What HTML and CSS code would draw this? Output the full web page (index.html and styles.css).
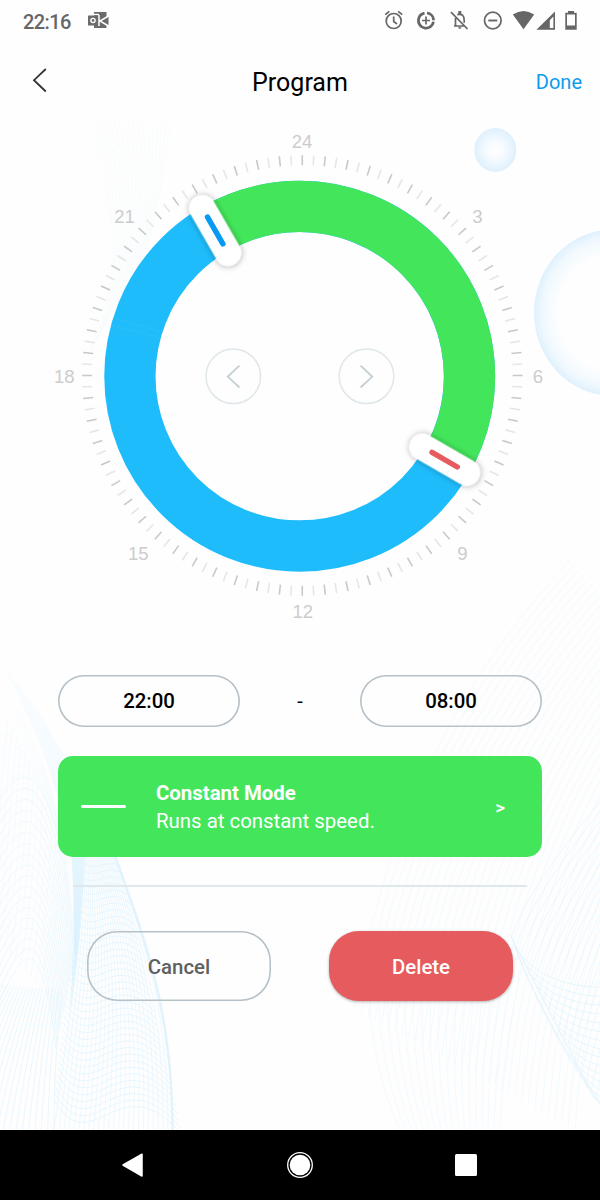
FILE: index.html
```html
<!DOCTYPE html>
<html lang="en">
<head>
  <meta charset="UTF-8" />
  <meta name="viewport" content="width=device-width, initial-scale=1.0"/>
  <title>Program</title>
  <link rel="stylesheet" href="styles.css">
</head>
<body>
  <svg class="backdrop" viewBox="0 0 600 1130" aria-hidden="true">
    <defs>
      <radialGradient id="bubble">
        <stop offset="0" stop-color="#fdfeff"/>
        <stop offset="0.35" stop-color="#f9fcff"/>
        <stop offset="1" stop-color="#def0fd"/>
      </radialGradient>
      <radialGradient id="bigBubble">
        <stop offset="0.68" stop-color="#fefefe"/>
        <stop offset="0.88" stop-color="#f1f9fe"/>
        <stop offset="1" stop-color="#dff1fd"/>
      </radialGradient>
      <linearGradient id="fold" x1="0" y1="0" x2="0" y2="1">
        <stop offset="0" stop-color="#fbfdff"/>
        <stop offset="0.35" stop-color="#f3fafe"/>
        <stop offset="0.6" stop-color="#e2f4fe"/>
        <stop offset="0.8" stop-color="#d9f1fe"/>
        <stop offset="1" stop-color="#eef9ff"/>
      </linearGradient>
    </defs>
    <ellipse cx="495.3" cy="150" rx="21" ry="22" fill="url(#bubble)"/>
    <ellipse cx="612" cy="312.7" rx="78" ry="83" fill="url(#bigBubble)"/>
    <path d="M0 663C25 690 45 722 66 757L86 830C84 900 78 970 69 1022C74 950 75 900 71 850C57 785 35 720 0 663Z" fill="url(#fold)"/>
    <g id="waves"></g>
  </svg>

  <header class="status-bar">
    <span class="clock">22:16</span>
    <svg class="mail-icon" width="21" height="17" viewBox="0 0 21 17">
      <path fill="#6b6b6b" d="M6 0h12.500v16H6z"/>
      <path fill="#6b6b6b" d="M12 8.500l8.500-4v9z"/>
      <path fill="none" stroke="#fff" stroke-width="1.500" d="M20.500 4L12 9l8.500 5M11 3v11M6 2.500h5"/>
      <rect x="0" y="3.500" width="10" height="10" rx="0.500" fill="#6b6b6b"/>
      <circle cx="5" cy="8.500" r="2.100" fill="none" stroke="#fff" stroke-width="1.400"/>
    </svg>
    <svg class="status-icons" width="210" height="24" viewBox="380 8 210 24">
      <g fill="none" stroke="#666" stroke-width="1.700">
        <circle cx="393.700" cy="21" r="7.500"/>
        <path d="M393.700 16.500v5l3.300 2.500M385.300 14.700l4-3.400M402.200 14.700l-4-3.400"/>
        <circle cx="426" cy="20.500" r="7.600" stroke-width="2.800" stroke-dasharray="10.500 1.600 32.800 2.900" transform="rotate(-82 426 20.500)"/>
        <path d="M426 16.500v8M422 20.500h8"/>
        <path d="M451 12.200L467.500 29M454 26h10.500M455.500 25.500v-7.500M457.300 14.600q6.900-1.700 6.900 5.900v2.200"/>
        <circle cx="492.800" cy="20.500" r="8.300"/>
        <path d="M488.300 20.500h9" stroke-width="1.900"/>
      </g>
      <g fill="#666">
        <path d="M458.300 11h3v3h-3zM458 27.300h3.600q-1.800 3.500-3.600 0z"/>
        <path d="M512.800 14.500Q523.500 7.500 534.200 14.500L523.500 29.200z"/>
        <path fill-rule="evenodd" d="M555 11.500v18.300h-18.600zM553.400 16.500l-3.600 3.800v7.700h3.600z"/>
        <path fill-rule="evenodd" d="M568 11h6v1.700h2.700v17.100h-11.400v-17.100h2.700zM567 14.600v10.800h8V14.600z"/>
      </g>
    </svg>
  </header>

  <nav class="top-bar">
    <svg class="back" width="16" height="26" viewBox="0 0 16 26"><path d="M13.800 2L2 13.200 13.800 24.500"/></svg>
    <h1>Program</h1>
    <a class="done">Done</a>
  </nav>

  <main>
    <svg class="dial" viewBox="0 120 600 520">
      <defs>
        <filter id="handleShadow" x="-40%" y="-40%" width="180%" height="180%">
          <feDropShadow dx="0" dy="0.500" stdDeviation="3" flood-color="#000" flood-opacity="0.36"/>
        </filter>
      </defs>
      <circle class="ticks" cx="302.300" cy="375.500" r="215.300" pathLength="600"/>
      <circle class="ticks minor" cx="302.300" cy="375.500" r="215.300" pathLength="600"/>
      <g class="hours">
        <text x="302" y="147.600">24</text>
        <text x="477.300" y="222.600">3</text>
        <text x="538" y="382.600">6</text>
        <text x="462.500" y="559.600">9</text>
        <text x="302.700" y="617.600">12</text>
        <text x="138.200" y="559.600">15</text>
        <text x="64.300" y="382.600">18</text>
        <text x="124.500" y="222.600">21</text>
      </g>
      <circle class="ring" cx="299.700" cy="376.200" r="169.800"/>
      <path class="ring-active" d="M214.800 229.150A169.800 169.800 0 0 1 446.750 461.100"/>
      <path d="M114 318l48 14M111 325.500l49 12" stroke="#34bff5" stroke-width="0.700"/>
      <g transform="translate(215.200 230.500) rotate(-30)">
        <rect class="handle" x="-13.200" y="-38.700" width="26.400" height="77.400" rx="13.200"/>
        <path class="grip start" d="M0-15.400V15.400"/>
      </g>
      <g transform="translate(444.700 459.700) rotate(-60)">
        <rect class="handle" x="-13.200" y="-38.700" width="26.400" height="77.400" rx="13.200"/>
        <path class="grip end" d="M0-14.600V14.600"/>
      </g>
      <g class="step">
        <circle cx="233.300" cy="376.300" r="27.300"/>
        <path d="M239.500 365.700l-11.700 10.900 11.700 10.900"/>
        <circle cx="366.500" cy="376.300" r="27.300"/>
        <path d="M360.500 365.700l11.700 10.900-11.700 10.900"/>
      </g>
    </svg>

    <div class="times">
      <div class="time">22:00</div>
      <span>-</span>
      <div class="time">08:00</div>
    </div>

    <div class="mode">
      <span class="mode-line"></span>
      <div class="mode-text">
        <strong>Constant Mode</strong>
        <p>Runs at constant speed.</p>
      </div>
      <span class="mode-arrow">&gt;</span>
    </div>

    <hr>

    <div class="actions">
      <button type="button" class="cancel">Cancel</button>
      <button type="button" class="delete">Delete</button>
    </div>
  </main>

  <footer class="nav-bar">
    <svg width="600" height="70" viewBox="0 0 600 70">
      <path d="M123 35L142 24.200V46z" fill="#fff" stroke="#fff" stroke-width="1.500" stroke-linejoin="round"/>
      <circle cx="300" cy="35" r="12.300" fill="none" stroke="#fff" stroke-width="1.300"/>
      <circle cx="300" cy="35" r="10.300" fill="#fff"/>
      <rect x="455" y="24" width="22" height="22" rx="1.500" fill="#fff"/>
    </svg>
  </footer>

  <script>
    // each family blends from one cubic curve to another: x1,y1, cx1,cy1, cx2,cy2, x2,y2
    const families = [
      { from: [0, 150, 50, 125, 110, 130, 165, 170], to: [0, 560, 40, 420, 100, 340, 146, 250], count: 26, color: '#fafcfd' },
      { from: [90, 120, 120, 200, 120, 300, 90, 350], to: [171, 120, 166, 160, 156, 220, 143, 262], count: 18, color: '#f8fbfd' },
      { from: [0, 690, 30, 720, 62, 790, 73, 920], to: [0, 795, 30, 740, 62, 790, 74, 960], count: 8, color: '#f5fbfe' },
      { from: [0, 800, 32, 740, 63, 800, 74, 960], to: [0, 1000, 25, 945, 42, 930, 56, 1050], count: 18, color: '#e8f6fd' },
      { from: [-15, 920, 0, 850, 0, 780, 8, 720], to: [56, 1010, 64, 950, 74, 880, 68, 830], count: 15, color: '#f2fafe' },
      { from: [-60, 1130, -40, 1070, -16, 1020, 4, 985], to: [54, 1130, 54, 1090, 56, 1040, 62, 990], count: 19, color: '#e4f5fe' },
      { from: [84, 857, 82, 940, 70, 1010, 54, 1130], to: [116, 857, 150, 950, 172, 1010, 173, 1130], count: 25, color: '#e8f6fe' },
      { from: [82, 862, 95, 874, 105, 858, 121, 866], to: [54, 1100, 92, 1165, 120, 1060, 182, 1135], count: 38, color: '#e2f4fe' },
      { from: [110, 845, 145, 940, 171, 1010, 172, 1130], to: [116, 857, 150, 950, 173, 1020, 173, 1130], count: 5, color: '#e1f3fd' },
      { from: [570, 560, 440, 700, 380, 850, 355, 1010], to: [720, 720, 620, 850, 585, 990, 575, 1130], count: 34, color: '#f0f9fd' },
      { from: [370, 1000, 370, 1040, 385, 1100, 400, 1130], to: [520, 970, 510, 1030, 502, 1080, 500, 1130], count: 18, color: '#f0f9fe' },
      { from: [610, 790, 550, 860, 520, 910, 512, 935], to: [640, 920, 620, 990, 605, 1050, 596, 1100], count: 19, color: '#e7f6fd' },
      { from: [511, 935, 520, 970, 565, 990, 610, 987], to: [585, 1080, 590, 1095, 600, 1107, 620, 1115], count: 15, color: '#e2f4fd' },
      { from: [511, 935, 530, 990, 563, 1055, 602, 1107], to: [514, 945, 535, 1000, 570, 1060, 604, 1107], count: 2, color: '#e1f3fd' }
    ];

    function drawWaves() {
      const waves = document.getElementById('waves');
      families.forEach(({ from, to, count, color }) => {
        for (let i = 0; i < count; i++) {
          const t = i / (count - 1);
          const p = from.map((v, k) => (v + (to[k] - v) * t).toFixed(1));
          const path = document.createElementNS('http://www.w3.org/2000/svg', 'path');
          path.setAttribute('d', `M${p[0]} ${p[1]}C${p.slice(2).join(' ')}`);
          path.setAttribute('stroke', color);
          waves.appendChild(path);
        }
      });
    }

    drawWaves();
  </script>
</body>
</html>
```

FILE: styles.css
```css
:root {
  --green: #43e65b;
  --blue: #1ebcfb;
  --link: #0c9bf0;
  --red: #e65b5d;
  --border: #b7c1c8;
}

* {
  box-sizing: border-box;
}

body {
  position: relative;
  display: flex;
  flex-direction: column;
  width: 600px;
  height: 1200px;
  margin: 0;
  overflow: hidden;
  background: #fefefe;
  color: #000;
  font-family: Roboto, sans-serif;
  font-size: 20px;
}

svg {
  display: block;
}

.backdrop {
  position: absolute;
  top: 0;
  left: 0;
  width: 600px;
  height: 1130px;
  z-index: -1;
}

#waves {
  fill: none;
  stroke-width: 0.8;
}

.status-bar {
  display: flex;
  align-items: center;
  height: 40px;
  padding: 0 10px 0 23px;
}

.clock {
  width: 65px;
  color: #666;
  font-weight: 500;
  letter-spacing: -0.6px;
  line-height: 24px;
  padding-top: 3px;
}

.status-icons {
  margin-left: auto;
}

.top-bar {
  display: grid;
  grid-template-columns: 100px 1fr 100px;
  align-items: center;
  height: 80px;
  padding: 0 18px 0 32px;
}

.top-bar h1 {
  margin: 0 0 0 -14px;
  padding-top: 4px;
  font-size: 25px;
  font-weight: 400;
  text-align: center;
}

.back path {
  fill: none;
  stroke: #333;
  stroke-width: 1.8;
}

.done {
  padding-top: 3px;
  color: var(--link);
  text-align: right;
}

.dial {
  width: 600px;
  height: 520px;
}

.ticks {
  fill: none;
  stroke: #c8c8c8;
  stroke-width: 10;
  stroke-dasharray: 0.7 9.3;
  stroke-dashoffset: 0.35;
}

.ticks.minor {
  stroke: #e6e6e6;
  stroke-dashoffset: 5.35;
}

.hours {
  fill: #ccc;
  font-family: "Liberation Sans", sans-serif;
  font-size: 18.5px;
  text-anchor: middle;
}

.ring,
.ring-active {
  fill: none;
  stroke: var(--blue);
  stroke-width: 51.3;
}

.ring-active {
  stroke: var(--green);
}

.handle {
  fill: #fff;
  filter: url(#handleShadow);
}

.grip {
  stroke-width: 5.4;
  stroke-linecap: round;
}

.grip.start {
  stroke: #0899f2;
}

.grip.end {
  stroke: var(--red);
}

.step {
  fill: none;
}

.step circle {
  stroke: #e0e7eb;
  stroke-width: 1.5;
}

.step path {
  stroke: #c3cfd5;
  stroke-width: 1.8;
}

.times {
  display: flex;
  align-items: center;
  justify-content: space-between;
  margin: 35px 58px 0;
  height: 52px;
}

.time {
  width: 182px;
  height: 52px;
  border-radius: 26px;
  box-shadow: inset 0 0 0 1.6px var(--border);
  font-size: 20.4px;
  font-weight: 500;
  line-height: 53px;
  text-align: center;
}

.mode {
  display: flex;
  align-items: center;
  height: 101px;
  margin: 29px 58px 0;
  padding: 0 37px 0 23px;
  border-radius: 15px;
  background: var(--green);
  color: #fff;
}

.mode-line {
  width: 45px;
  height: 3px;
  border-radius: 2px;
  background: #fff;
}

.mode-text {
  margin-left: 30px;
  font-size: 20.4px;
  line-height: 28px;
}

.mode-text p {
  margin: 0;
}

.mode-arrow {
  margin-left: auto;
  padding-top: 2px;
  font-weight: 500;
  font-size: 19px;
}

hr {
  height: 2px;
  margin: 28px 73px 0;
  border: 0;
  background: #dfe8eb;
}

.actions {
  display: flex;
  justify-content: space-between;
  margin: 44px 87px 0;
}

button {
  width: 184px;
  height: 70px;
  padding: 2px 0 0;
  border: none;
  border-radius: 30px;
  font: 500 20.4px Roboto, sans-serif;
}

.cancel {
  box-shadow: inset 0 0 0 1.6px var(--border);
  background: none;
  color: #606060;
}

.delete {
  background: var(--red);
  color: #fff;
  box-shadow: 0 1px 3px rgba(0, 0, 0, 0.3);
}

.nav-bar {
  height: 70px;
  margin-top: auto;
  background: #000;
}
```
